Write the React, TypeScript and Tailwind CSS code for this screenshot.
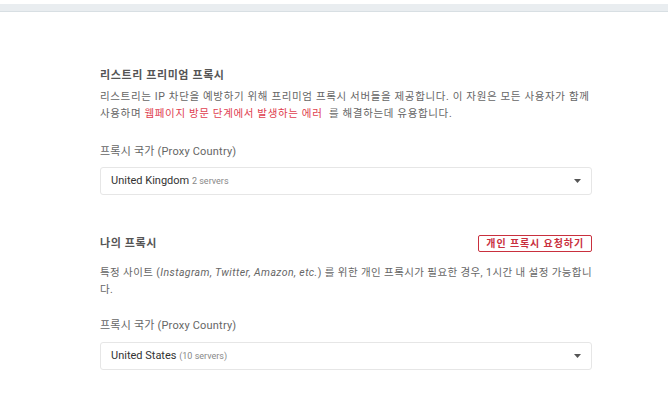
const font = { fontFamily: "Roboto, 'Noto Sans CJK KR', sans-serif" };

const Caret = () => (
  <svg width="7" height="4" viewBox="0 0 7 4" className="text-[#555]">
    <path d="M0 0 H7 L3.5 4 Z" fill="currentColor" />
  </svg>
);

const SelectBox = ({ name, sub }: { name: string; sub: string }) => (
  <div className="flex h-[28px] items-center justify-between rounded-[3px] border border-[#e6e6e6] bg-white pl-[10px] pr-[10px]">
    <span className="text-[11px] text-[#333]">
      {name} <span className="text-[9px] text-[#888]">{sub}</span>
    </span>
    <Caret />
  </div>
);

export default function App() {
  return (
    <div className="min-h-[414px] w-full bg-white" style={font}>
      <div className="pt-[4px]">
        <div className="h-[8px] border-b border-[#d8dfe3] bg-[#e9edf0]" />
      </div>

      <div className="ml-[100px] w-[492px] pt-[56px]">
        <h2 className="text-[11px] font-bold leading-[16px] tracking-[0.6px] text-[#555]">리스트리 프리미엄 프록시</h2>
        <p className="mt-[4px] text-[10.5px] leading-[17px] tracking-[0.65px] text-[#666]">
          리스트리는 IP 차단을 예방하기 위해 프리미엄 프록시 서버들을 제공합니다. 이 자원은 모든 사용자가 함께
          사용하며 <span className="text-[#e0404f]">웹페이지 방문 단계에서 발생하는 에러</span>&nbsp; 를 해결하는데 유용합니다.
        </p>

        <div className="mt-[22px] text-[11px] leading-[16px] tracking-[0.2px] text-[#666]">프록시 국가 (Proxy Country)</div>
        <div className="mt-[7px]">
          <SelectBox name="United Kingdom" sub="2 servers" />
        </div>

        <div className="mt-[40px] flex h-[17px] items-center justify-between">
          <h2 className="text-[11px] font-bold leading-[16px] tracking-[0.6px] text-[#555]">나의 프록시</h2>
          <button className="flex h-[17px] items-center rounded-[2px] border border-[#c9303e] px-[7px] text-[10px] font-bold tracking-[0.9px] text-[#c9303e]">
            개인 프록시 요청하기
          </button>
        </div>
        <p className="mt-[12px] text-[10.5px] leading-[17px] tracking-[0.4px] text-[#666]">
          특정 사이트 (<i>Instagram, Twitter, Amazon, etc.</i>) 를 위한 개인 프록시가 필요한 경우, 1시간 내 설정 가능합니다.
        </p>

        <div className="mt-[20px] text-[11px] leading-[16px] tracking-[0.2px] text-[#666]">프록시 국가 (Proxy Country)</div>
        <div className="mt-[8px]">
          <SelectBox name="United States" sub="(10 servers)" />
        </div>
      </div>
    </div>
  );
}
